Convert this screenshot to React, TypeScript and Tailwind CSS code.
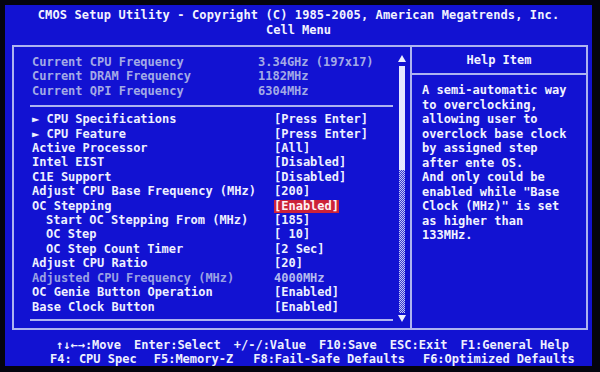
import React from "react";

interface Row {
  label: string;
  value: string;
  arrow?: boolean;
  indent?: boolean;
  dim?: boolean;
  selected?: boolean;
}

const status: { label: string; value: string }[] = [
  { label: "Current CPU Frequency", value: "3.34GHz (197x17)" },
  { label: "Current DRAM Frequency", value: "1182MHz" },
  { label: "Current QPI Frequency", value: "6304MHz" },
];

const rows: Row[] = [
  { label: "CPU Specifications", value: "[Press Enter]", arrow: true },
  { label: "CPU Feature", value: "[Press Enter]", arrow: true },
  { label: "Active Processor", value: "[All]" },
  { label: "Intel EIST", value: "[Disabled]" },
  { label: "C1E Support", value: "[Disabled]" },
  { label: "Adjust CPU Base Frequency (MHz)", value: "[200]" },
  { label: "OC Stepping", value: "[Enabled]", selected: true },
  { label: "Start OC Stepping From (MHz)", value: "[185]", indent: true },
  { label: "OC Step", value: "[ 10]", indent: true },
  { label: "OC Step Count Timer", value: "[2 Sec]", indent: true },
  { label: "Adjust CPU Ratio", value: "[20]" },
  { label: "Adjusted CPU Frequency (MHz)", value: "4000MHz", dim: true },
  { label: "OC Genie Button Operation", value: "[Enabled]" },
  { label: "Base Clock Button", value: "[Enabled]" },
];

const helpLines = [
  "A semi-automatic way",
  "to overclocking,",
  "allowing user to",
  "overclock base clock",
  "by assigned step",
  "after ente OS.",
  "And only could be",
  'enabled while "Base',
  'Clock (MHz)" is set',
  "as higher than",
  "133MHz.",
];

function Triangle({ down }: { down?: boolean }) {
  return (
    <svg width="8" height="7" viewBox="0 0 8 7" className="block">
      <path d={down ? "M0 0H8L4 7Z" : "M4 0L8 7H0Z"} fill="#eef0ff" />
    </svg>
  );
}

function Scrollbar() {
  return (
    <div className="mr-[4px] flex w-[8px] flex-col items-center pt-[8px]">
      <Triangle />
      <div className="mt-[4px] h-[104px] w-[6px] bg-[#e6e8ff]" />
      <div className="h-[143px] w-[6px] bg-[repeating-conic-gradient(#c4c8f4_0_25%,#3436d4_0_50%)] bg-[length:2px_2px]" />
      <div className="mt-[2px]">
        <Triangle down />
      </div>
    </div>
  );
}

export default function App() {
  return (
    <div className="h-[372px] w-[600px] overflow-hidden bg-[#04040e] pl-[5px] pt-[5px] font-['DejaVu_Sans_Mono','Liberation_Mono',monospace] text-[12px] font-bold">
      <div className="flex h-[361px] w-[587px] flex-col bg-[#1212d2] text-[#f2f3ff]">
        {/* Title */}
        <div className="pt-[3px] text-center leading-[15px]">
          <div className="whitespace-pre tracking-[0.12px]">
            CMOS Setup Utility - Copyright (C) 1985-2005, American Megatrends, Inc.
          </div>
          <div>Cell Menu</div>
        </div>

        {/* Main frame */}
        <div className="ml-[7px] mt-[7px] flex h-[285px] w-[576px] border-2 border-[#aeb3f0]">
          {/* Left panel */}
          <div className="flex w-[396px]">
            <div className="flex-1 pt-[8px]">
              <div className="pl-[18px] leading-[14.4px] text-[#a3aae6]">
                {status.map((s) => (
                  <div key={s.label} className="grid grid-cols-[226px_1fr] whitespace-pre">
                    <span>{s.label}</span>
                    <span>{s.value}</span>
                  </div>
                ))}
              </div>
              <div className="ml-[16px] mr-[5px] mt-[7px] h-[2px] bg-[#aeb3f0]" />
              <div className="mt-[5px] pl-[18px] leading-[14.4px]">
                {rows.map((r) => (
                  <div
                    key={r.label}
                    className={`grid grid-cols-[242px_1fr] whitespace-pre ${
                      r.dim ? "text-[#9aa1e4]" : "text-[#eef0ff]"
                    }`}
                  >
                    <span className={r.indent ? "pl-[14px]" : ""}>
                      {r.arrow ? "► " : ""}
                      {r.label}
                    </span>
                    <span>
                      {r.selected ? (
                        <span className="inline-block h-[13px] bg-[#cc2238] leading-[13px] text-[#fff2f4]">
                          {r.value}
                        </span>
                      ) : (
                        <span className={r.dim ? "text-[#b4baef]" : ""}>{r.value}</span>
                      )}
                    </span>
                  </div>
                ))}
              </div>
              <div className="ml-[16px] mr-[5px] mt-[5px] h-[2px] bg-[#aeb3f0]" />
            </div>
            <Scrollbar />
          </div>

          {/* Help panel */}
          <div className="flex flex-1 flex-col border-l-2 border-[#aeb3f0]">
            <div className="h-[28px] border-b-2 border-[#aeb3f0] text-center leading-[26px]">
              Help Item
            </div>
            <div className="pl-[10px] pt-[8px] leading-[14.5px]">
              {helpLines.map((l) => (
                <div key={l} className="whitespace-pre">
                  {l}
                </div>
              ))}
            </div>
          </div>
        </div>

        {/* Footer */}
        <div className="mt-[8px] leading-[14px] text-[#eef0ff]">
          <div className="flex gap-[13px] whitespace-pre pl-[51px]">
            <span>↑↓←→:Move</span>
            <span>Enter:Select</span>
            <span>+/-/:Value</span>
            <span>F10:Save</span>
            <span>ESC:Exit</span>
            <span>F1:General Help</span>
          </div>
          <div className="flex whitespace-pre pl-[45px]">
            <span>F4: CPU Spec</span>
            <span className="ml-[17px]">F5:Memory-Z</span>
            <span className="ml-[20px]">F8:Fail-Safe Defaults</span>
            <span className="ml-[18px]">F6:Optimized Defaults</span>
          </div>
        </div>
      </div>
    </div>
  );
}
